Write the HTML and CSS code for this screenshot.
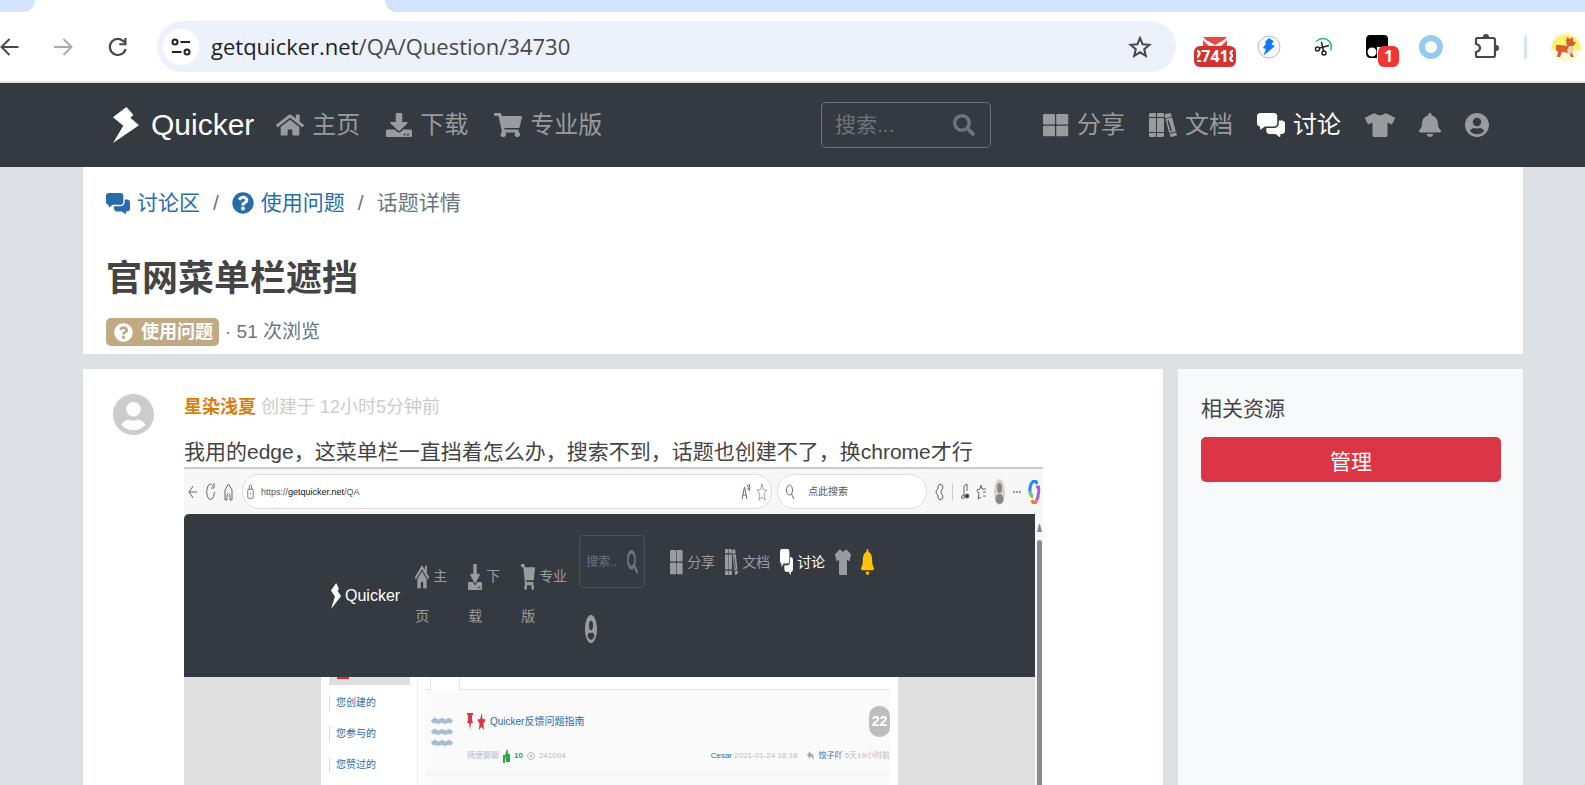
FILE: index.html
```html
<!DOCTYPE html>
<html lang="zh-CN">
<head>
    <meta charset="UTF-8">
    <meta name="viewport" content="width=device-width, initial-scale=1.0">
    <title>官网菜单栏遮挡 - Quicker</title>
    <link rel="stylesheet" href="styles.css">
</head>

<body>
    <svg class="sprite" aria-hidden="true">
        <symbol id="i-logo" viewBox="0 0 26 36" preserveAspectRatio="none"><path d="M13.400 0L20.500 8L17.400 10.700L26 18.300L0 36L10.300 18.700L0 10.300Z"/></symbol>
        <symbol id="i-home" viewBox="0 0 576 512" preserveAspectRatio="none"><path d="M280.37 148.26L96 300.11V464a16 16 0 0 0 16 16l112.06-.29a16 16 0 0 0 15.92-16V368a16 16 0 0 1 16-16h64a16 16 0 0 1 16 16v95.64a16 16 0 0 0 16 16.05L464 480a16 16 0 0 0 16-16V300L295.67 148.26a12.19 12.19 0 0 0-15.3 0zM571.6 251.47L488 182.56V44.05a12 12 0 0 0-12-12h-56a12 12 0 0 0-12 12v72.61L318.47 43a48 48 0 0 0-61 0L4.34 251.47a12 12 0 0 0-1.6 16.9l25.5 31A12 12 0 0 0 45.15 301l235.22-193.74a12.19 12.19 0 0 1 15.3 0L530.9 301a12 12 0 0 0 16.9-1.6l25.5-31a12 12 0 0 0-1.7-16.93z"/></symbol>
        <symbol id="i-download" viewBox="0 0 512 512" preserveAspectRatio="none"><path d="M216 0h80c13.3 0 24 10.7 24 24v168h87.7c17.8 0 26.700 21.500 14.100 34.100L269.700 378.300c-7.500 7.500-19.800 7.500-27.300 0L90.100 226.100c-12.600-12.600-3.700-34.100 14.100-34.100H192V24c0-13.300 10.700-24 24-24zm296 376v112c0 13.300-10.700 24-24 24H24c-13.300 0-24-10.700-24-24V376c0-13.300 10.700-24 24-24h146.700l49 49c20.100 20.100 52.500 20.100 72.600 0l49-49H488c13.300 0 24 10.700 24 24zm-124 88c0-11-9-20-20-20s-20 9-20 20 9 20 20 20 20-9 20-20zm64 0c0-11-9-20-20-20s-20 9-20 20 9 20 20 20 20-9 20-20z"/></symbol>
        <symbol id="i-cart" viewBox="0 0 576 512" preserveAspectRatio="none"><path d="M528.12 301.319l47.273-208C578.806 78.301 567.391 64 551.99 64H159.208l-9.166-44.810C147.758 8.021 137.930 0 126.529 0H24C10.745 0 0 10.745 0 24v16c0 13.255 10.745 24 24 24h69.883l70.248 343.435C147.325 417.100 136 435.222 136 456c0 30.928 25.072 56 56 56s56-25.072 56-56c0-15.674-6.447-29.835-16.824-40h209.647C430.447 426.165 424 440.326 424 456c0 30.928 25.072 56 56 56s56-25.072 56-56c0-22.172-12.888-41.332-31.579-50.405l5.517-24.276c3.413-15.018-8.002-29.319-23.403-29.319H218.117l-6.545-32h293.145c11.206 0 20.920-7.754 23.403-18.681z"/></symbol>
        <symbol id="i-search" viewBox="0 0 512 512" preserveAspectRatio="none"><path d="M505 442.700L405.300 343c-4.500-4.500-10.600-7-17-7H372c27.600-35.300 44-79.700 44-128C416 93.100 322.900 0 208 0S0 93.100 0 208s93.100 208 208 208c48.300 0 92.700-16.400 128-44v16.300c0 6.400 2.500 12.500 7 17l99.700 99.700c9.400 9.400 24.600 9.400 33.900 0l28.300-28.300c9.400-9.400 9.400-24.600.1-34zM208 336c-70.700 0-128-57.200-128-128 0-70.700 57.200-128 128-128 70.700 0 128 57.200 128 128 0 70.700-57.200 128-128 128z"/></symbol>
        <symbol id="i-grid" viewBox="0 0 26 24" preserveAspectRatio="none"><rect x="0" y="1" width="12" height="10.500" rx="1"/><rect x="13.200" y="1" width="12" height="10.500" rx="1"/><rect x="0" y="12.700" width="12" height="10.500" rx="1"/><rect x="13.200" y="12.700" width="12" height="10.500" rx="1"/></symbol>
        <symbol id="i-books" viewBox="0 0 28 24" preserveAspectRatio="none"><path d="M1 0H7V4H0V1ZM0 5H7V19H0ZM0 20H7V24H1L0 23ZM8 0H14L15 1V4H8ZM8 5H15V19H8ZM8 20H15V23L14 24H8ZM15.500 1.300L21 0L22 .8L22.800 3.700L16.300 5.200ZM16.500 6.100L23.100 4.600L26.800 18.500L20.200 20ZM20.500 21L27.100 19.400L28 22.600L22.300 24L21.400 23.300Z"/><path d="M19 7.500L22.300 18" stroke="#343a40" stroke-width="1.500"/></symbol>
        <symbol id="i-comments" viewBox="0 0 576 512" preserveAspectRatio="none"><path d="M416 224V64c0-35.300-28.700-64-64-64H64C28.700 0 0 28.700 0 64v160c0 35.300 28.700 64 64 64v54.200c0 8 9.100 12.600 15.500 7.800l82.800-62.100H352c35.300.1 64-28.600 64-63.900zm96-64h-64v64c0 52.900-43.100 96-96 96H192v64c0 35.300 28.700 64 64 64h125.700l82.800 62.100c6.400 4.800 15.500.2 15.500-7.800V448h32c35.300 0 64-28.700 64-64V224c0-35.300-28.700-64-64-64z"/></symbol>
        <symbol id="i-shirt" viewBox="0 0 640 512" preserveAspectRatio="none"><path d="M631.200 96.500L436.500 0C416.400 27.800 371.900 47.200 320 47.200S223.600 27.800 203.500 0L8.800 96.500c-7.900 4-11.100 13.600-7.200 21.500l57.200 114.500c4 7.900 13.600 11.100 21.500 7.200l56.600-27.700c10.600-5.200 23 2.500 23 14.400V480c0 17.700 14.300 32 32 32h256c17.700 0 32-14.300 32-32V226.300c0-11.800 12.400-19.600 23-14.400l56.600 27.700c7.900 4 17.500.8 21.500-7.200L638.300 118c4-7.900.8-17.600-7.100-21.500z"/></symbol>
        <symbol id="i-bell" viewBox="0 0 448 512" preserveAspectRatio="none"><path d="M224 512c35.320 0 63.970-28.650 63.970-64H160.030c0 35.350 28.650 64 63.970 64zm215.390-149.710c-19.320-20.760-55.470-51.990-55.470-154.290 0-77.700-54.480-139.900-127.940-155.160V32c0-17.670-14.320-32-31.980-32s-31.980 14.330-31.980 32v20.840C118.560 68.100 64.080 130.300 64.080 208c0 102.300-36.150 133.530-55.470 154.290-6 6.450-8.660 14.160-8.610 21.710.11 16.400 12.980 32 32.100 32h383.800c19.120 0 32-15.600 32.100-32 .05-7.550-2.610-15.270-8.610-21.710z"/></symbol>
        <symbol id="i-user" viewBox="0 8 496 496" preserveAspectRatio="none"><path d="M248 8C111 8 0 119 0 256s111 248 248 248 248-111 248-248S385 8 248 8zm0 96c48.600 0 88 39.400 88 88s-39.400 88-88 88-88-39.400-88-88 39.400-88 88-88zm0 344c-58.700 0-111.300-26.600-146.500-68.200 18.800-35.400 55.600-59.800 98.500-59.800 2.400 0 4.800.4 7.100 1.100 13 4.200 26.600 6.900 40.900 6.900 14.300 0 28-2.700 40.900-6.900 2.300-.7 4.700-1.100 7.100-1.100 42.900 0 79.700 24.400 98.500 59.800C359.300 421.400 306.700 448 248 448z"/></symbol>
        <symbol id="i-question" viewBox="0 0 512 512"><path d="M504 256c0 136.997-111.043 248-248 248S8 392.997 8 256C8 119.083 119.043 8 256 8s248 111.083 248 248zM262.655 90c-54.497 0-89.255 22.957-116.549 63.758-3.536 5.286-2.353 12.415 2.715 16.258l34.699 26.310c5.205 3.947 12.621 3.008 16.665-2.122 17.864-22.658 30.113-35.797 57.303-35.797 20.429 0 45.698 13.148 45.698 32.958 0 14.976-12.363 22.667-32.534 33.976C247.128 238.528 216 254.941 216 296v4c0 6.627 5.373 12 12 12h56c6.627 0 12-5.373 12-12v-1.333c0-28.462 83.186-29.647 83.186-106.667 0-58.002-60.165-102-116.531-102zM256 338c-25.365 0-46 20.635-46 46 0 25.364 20.635 46 46 46s46-20.636 46-46c0-25.365-20.635-46-46-46z"/></symbol>
        <symbol id="i-star" viewBox="0 0 24 24" preserveAspectRatio="none"><path d="M12 1L15.200 8.700L23.500 9.400L17.200 14.800L19.100 23L12 18.600L4.900 23L6.800 14.800L.5 9.400L8.800 8.700Z"/></symbol>
    </svg>

    <!-- browser chrome -->
    <div class="tab-strip">
        <div class="tab-prev"></div>
        <div class="tab-active"></div>
        <div class="tab-rest"></div>
    </div>
    <div class="toolbar">
        <div class="toolbar-nav">
            <button aria-label="后退"><svg viewBox="0 0 20 20"><path d="M18.500 10H2M9.500 2L1.500 10L9.500 18" fill="none" stroke="#474747" stroke-width="2"/></svg></button>
            <button aria-label="前进"><svg viewBox="0 0 20 20"><path d="M0 10H17M9.500 2L17.500 10L9.500 18" fill="none" stroke="#ababab" stroke-width="2"/></svg></button>
            <button aria-label="刷新"><svg viewBox="0 0 20 20"><path d="M16.500 5.500A8 8 0 1 0 17.600 12" fill="none" stroke="#474747" stroke-width="2.200"/><path d="M18.500 1V8.300H11.200V6.200H16.300V1Z" fill="#474747"/></svg></button>
        </div>
        <div class="omnibox">
            <button class="site-info" aria-label="网站信息"><svg width="20" height="20" viewBox="0 0 20 20" fill="none" stroke="#222" stroke-width="2"><circle cx="4" cy="5" r="2.500"/><path d="M9.500 5H19M1 15H10.500"/><circle cx="16" cy="15" r="2.500"/></svg></button>
            <div class="url" aria-label="地址"><b>getquicker.net</b>/QA/Question/34730</div>
            <button aria-label="收藏"><svg width="24" height="24" viewBox="0 0 24 24"><path d="M12 3L14.600 9.200L21.400 9.800L16.200 14.200L17.800 20.900L12 17.300L6.200 20.900L7.800 14.200L2.600 9.800L9.400 9.200Z" fill="none" stroke="#474747" stroke-width="2"/></svg></button>
        </div>
        <div class="extensions">
            <button class="ext" aria-label="邮件"><svg viewBox="0 0 24 24"><path d="M0 2H24L21 5L12 10L3 5Z" fill="#ea4a3d"/><path d="M0 5L6 11H0ZM24 5L18 11H24Z" fill="#ea4a3d"/></svg><span class="count count-wide"><span>27418</span></span></button>
            <button class="ext" aria-label="Quicker"><svg viewBox="0 0 24 24"><circle cx="12" cy="12" r="11" fill="#f8f8fa" stroke="#b7bac2"/><path d="M12 3L16.500 6L14.500 9.500L18 11L6.500 20.500L9 14L6 13L9 8.500L8 7Z" fill="#0a78ff"/></svg></button>
            <button class="ext" aria-label="剪切"><svg viewBox="0 0 24 24" fill="none"><path d="M5 6.500C12 0 23 5 19.500 15.500" stroke="#1fc373" stroke-width="1.500"/><g stroke="#222" stroke-width="1.500"><circle cx="6.500" cy="14" r="2"/><circle cx="13" cy="18" r="2"/><path d="M8.500 13L18 10.500M12.500 16L10.500 7"/></g></svg></button>
            <button class="ext" aria-label="脚本"><svg viewBox="0 0 24 24"><path d="M5 0H19Q23 0 23 4V12H12V23H6Q1 23 1 18V5Q1 0 5 0Z" fill="#000"/><circle cx="7" cy="17" r="4.500" fill="#fff"/></svg><span class="count count-one">1</span></button>
            <button class="ext" aria-label="圆环"><svg viewBox="0 0 24 24"><circle cx="12" cy="12" r="9" fill="none" stroke="#96cbf0" stroke-width="6"/></svg></button>
            <button class="ext" aria-label="扩展程序"><svg viewBox="0 0 24 24"><path d="M4 3H20Q22 3 22 5V20Q22 22 20 22H4Q3 22 3 20V17Q7 16 7 13Q7 10 3 9V5Q3 3 4 3Z" fill="none" stroke="#474747" stroke-width="2.200"/><path d="M10 2Q10 -1 13 -1Q16 -1 16 2ZM23 10Q26 10 26 13Q26 16 23 16Z" fill="#474747"/></svg></button>
        </div>
        <div class="toolbar-line"></div>
        <button class="profile" aria-label="个人资料"><svg width="30" height="30" viewBox="0 0 30 30"><circle cx="15" cy="15" r="15" fill="#fffad5"/><path d="M0 18A15 15 0 1 1 30 18Z" fill="#fdf26b"/><path d="M15 9L16 5L19 7L22 5V9L25 11L22 14L21 21L23 25H20L18 21L11 20L9 25H6L7 20L5 18V13L9 13L16 14Z" fill="#d6612c"/><path d="M18 14L22 14L21 20L19 23L16 19Z" fill="#e8d5b5"/></svg></button>
    </div>

    <!-- site header -->
    <nav class="navbar">
        <a class="brand" href="#"><svg><use href="#i-logo"/></svg>Quicker</a>
        <a class="nav-link" href="#"><svg class="w28"><use href="#i-home"/></svg>主页</a>
        <a class="nav-link" href="#"><svg class="w26"><use href="#i-download"/></svg>下载</a>
        <a class="nav-link" href="#"><svg class="w28"><use href="#i-cart"/></svg>专业版</a>
        <div class="nav-right">
            <form class="nav-search">
                <input type="text" placeholder="搜索..." aria-label="搜索">
                <button type="button" aria-label="搜索"><svg width="22" height="22"><use href="#i-search"/></svg></button>
            </form>
            <a class="nav-link" href="#"><svg class="w26"><use href="#i-grid"/></svg>分享</a>
            <a class="nav-link" href="#"><svg class="w28"><use href="#i-books"/></svg>文档</a>
            <a class="nav-link active" href="#"><svg class="w28"><use href="#i-comments"/></svg>讨论</a>
            <a class="nav-link" href="#" aria-label="皮肤"><svg class="w30"><use href="#i-shirt"/></svg></a>
            <a class="nav-link" href="#" aria-label="通知"><svg class="w22"><use href="#i-bell"/></svg></a>
            <a class="nav-link" href="#" aria-label="账户"><svg><use href="#i-user"/></svg></a>
        </div>
    </nav>

    <div class="container">
        <header class="topic-header">
            <div class="breadcrumb">
                <a href="#"><svg width="24" height="21"><use href="#i-comments"/></svg>讨论区</a>
                <span>/</span>
                <a href="#"><svg width="22" height="22"><use href="#i-question"/></svg>使用问题</a>
                <span>/</span>
                <span>话题详情</span>
            </div>
            <h1>官网菜单栏遮挡</h1>
            <div class="topic-info">
                <a class="badge" href="#"><svg width="19" height="19"><use href="#i-question"/></svg>使用问题</a>
                <span>· 51 次浏览</span>
            </div>
        </header>

        <div class="columns">
            <article class="post">
                <svg class="avatar"><use href="#i-user"/></svg>
                <div class="post-body">
                    <div class="post-meta"><a href="#">星染浅夏</a> 创建于 12小时5分钟前</div>
                    <p>我用的edge，这菜单栏一直挡着怎么办，搜索不到，话题也创建不了，换chrome才行</p>

                    <div class="shot">
                        <div class="shot-bar">
                            <svg width="9" height="20" viewBox="0 0 9 20"><path d="M9 10H1M5 4L1 10L5 16"/></svg>
                            <svg width="9" height="20" viewBox="0 0 9 20"><path d="M7 4Q4 0 2 4Q0 8 1 13Q3 19 6 17Q8 15 8.500 10M8 1V6H5"/></svg>
                            <svg width="9" height="20" viewBox="0 0 9 20"><path d="M1 18V8L4.500 2L8 8V18H6V13Q4.500 10 3 13V18Z"/></svg>
                            <div class="shot-url">
                                <svg width="7" height="18" viewBox="0 0 9 20" preserveAspectRatio="none"><rect x="1" y="7" width="7" height="10" rx="1"/><path d="M3 7V3Q4.500 1 6 3V7M4.500 11V13"/></svg>
                                <span>https://<b>getquicker.net</b>/QA</span>
                                <svg width="9" height="16" viewBox="0 0 9 16"><path d="M1 15L3.500 3L6 15M2 11H5M6 1Q8 3 7 6M8 0Q10 4 8 7"/></svg>
                                <svg width="10" height="18"><use href="#i-star"/></svg>
                            </div>
                            <div class="shot-find">
                                <svg width="8" height="16" viewBox="0 0 8 16"><ellipse cx="3.500" cy="6" rx="3" ry="5"/><path d="M5.500 10L8 15"/></svg>
                                <span>点此搜索</span>
                            </div>
                            <div class="shot-tools">
                                <svg width="8" height="20" viewBox="0 0 8 20"><path d="M7 6Q7 2 4 2L2 4V7Q0 8 0 10Q0 12 2 13V16L4 18Q7 18 7 14Q5 12 5 10Q5 8 7 6Z"/></svg>
                                <i></i>
                                <svg width="8" height="18" viewBox="0 0 8 18"><path d="M3 13V3L6 1V8"/><circle cx="2" cy="14" r="1.500"/><circle cx="6" cy="13" r="2" fill="#333"/></svg>
                                <svg width="9" height="18" viewBox="0 0 9 18"><path d="M9 6H5L4 2L3 6L0 7L2 11L1 16L4 14M6 9H9M6 13H9"/></svg>
                                <svg width="11" height="26" viewBox="0 0 11 26"><ellipse cx="5.500" cy="13" rx="5.500" ry="13" fill="#d5d2cd" stroke="none"/><ellipse cx="5.500" cy="9" rx="2.500" ry="5" fill="#8b8681" stroke="none"/><ellipse cx="5.500" cy="20" rx="4" ry="5" fill="#8b8681" stroke="none"/></svg>
                                <svg width="8" height="4" viewBox="0 0 8 4"><path d="M0 2H2M3 2H5M6 2H8" stroke="#444"/></svg>
                                <svg width="11" height="24" viewBox="0 0 11 24" class="copilot"><path d="M3 16L1.500 14Q0 9 2 4L4 1.500H7L8 4" stroke="#1d8fe8"/><path d="M1.500 11Q1 17 4 17" stroke="#8fc93a"/><path d="M7 7H9.500Q10.500 11 9 16L8 20" stroke="#a65be0"/><path d="M3 20L4 22.500H6.500L8 19" stroke="#ff704d"/></svg>
                            </div>
                        </div>
                        <div class="shot-page">
                            <div class="shot-main">
                                <div class="shot-nav">
                                    <a class="shot-brand" href="#"><svg width="10" height="26"><use href="#i-logo"/></svg>Quicker</a>
                                    <a class="shot-item" href="#"><svg><use href="#i-home"/></svg>主页</a>
                                    <a class="shot-item" href="#"><svg><use href="#i-download"/></svg>下载</a>
                                    <a class="shot-item wide" href="#"><svg><use href="#i-cart"/></svg>专业版</a>
                                    <div class="shot-right">
                                        <div class="shot-links">
                                            <div class="shot-search">搜索.. <svg width="11" height="24"><use href="#i-search"/></svg></div>
                                            <a href="#"><svg><use href="#i-grid"/></svg>分享</a>
                                            <a href="#"><svg><use href="#i-books"/></svg>文档</a>
                                            <a class="active" href="#"><svg><use href="#i-comments"/></svg>讨论</a>
                                            <a href="#" aria-label="皮肤"><svg class="shirt"><use href="#i-shirt"/></svg></a>
                                            <a class="bell" href="#" aria-label="通知"><svg><use href="#i-bell"/></svg></a>
                                        </div>
                                        <svg class="shot-user"><use href="#i-user"/></svg>
                                    </div>
                                </div>
                                <div class="shot-content">
                                    <div class="shot-menu">
                                        <div class="current"><span></span></div>
                                        <a href="#">您创建的</a>
                                        <a href="#">您参与的</a>
                                        <a href="#">您赞过的</a>
                                    </div>
                                    <div class="shot-list">
                                        <div class="shot-tabs"><span></span></div>
                                        <div class="shot-topic">
                                            <svg class="waves" width="20" height="30" viewBox="0 0 20 30"><path d="M0 5L3 3L6 5L10 3L13 5L17 3L20 5M0 16L3 14L6 16L10 14L13 16L17 14L20 16M0 27L3 25L6 27L10 25L13 27L17 25L20 27"/></svg>
                                            <div class="shot-text">
                                                <div class="shot-title">
                                                    <svg width="6" height="17" viewBox="0 0 6 17"><path d="M0 0H6V2H5V7L6 10H4L3 17L2 10H0L1 7V2H0Z"/></svg>
                                                    <svg width="9" height="19"><use href="#i-star"/></svg>
                                                    <a href="#">Quicker反馈问题指南</a>
                                                    <span class="replies">22</span>
                                                </div>
                                                <div class="shot-stats">
                                                    <span>随便聊聊</span>
                                                    <svg width="7" height="14" viewBox="0 0 7 14" fill="#28a745"><path d="M0 6H2V14H0ZM2 6L4 0L5 2V5H7V13H3Z"/></svg>
                                                    <b>10</b>
                                                    <svg width="8" height="8" viewBox="0 0 8 8" fill="none" stroke="#bbb"><circle cx="4" cy="4" r="3.500"/><circle cx="4" cy="4" r="1"/></svg>
                                                    <span>241094</span>
                                                    <span class="last"><a href="#">Cesar</a> 2021-01-24 18:18</span>
                                                    <svg width="7" height="12" viewBox="0 0 7 12" fill="#aaa"><path d="M0 5L3 1V3Q7 3 7 10Q5 6 3 7V9Z"/></svg>
                                                    <span><a href="#">饺子吖</a> 5天19小时前</span>
                                                </div>
                                            </div>
                                        </div>
                                    </div>
                                </div>
                            </div>
                            <div class="shot-scroll"><i></i></div>
                        </div>
                    </div>
                </div>
            </article>

            <aside class="sidebar">
                <h2>相关资源</h2>
                <button>管理</button>
            </aside>
        </div>
    </div>
</body>

</html>
```
FILE: styles.css
```css
* {
    box-sizing: border-box;
}

body {
    margin: 0;
    height: 100vh;
    overflow: hidden;
    display: flex;
    flex-direction: column;
    font-family: "Liberation Sans", "Noto Sans CJK SC", sans-serif;
    font-size: 21px;
    line-height: 32px;
    color: #444;
    background: #dde0e5;
}

a {
    color: #286ca9;
    text-decoration: none;
}

button {
    padding: 0;
    border: none;
    background: none;
    font-family: inherit;
}

svg {
    display: block;
    flex: none;
    overflow: visible;
}

svg:not([fill]) {
    fill: currentColor;
}

.sprite {
    position: absolute;
    width: 0;
    height: 0;
}

/* browser */
.tab-strip {
    display: flex;
    flex: none;
    height: 12px;
    background: #fff;
}

.tab-prev {
    width: 35px;
    background: #d3e3fd;
    border-bottom-right-radius: 12px;
}

.tab-active {
    width: 350px;
}

.tab-rest {
    flex: 1;
    background: #d3e3fd;
    border-bottom-left-radius: 12px;
}

.toolbar {
    display: flex;
    flex: none;
    align-items: center;
    height: 71px;
    padding-right: 4px;
    background: #fff;
    border-bottom: 2px solid #e2e2de;
}

.toolbar-nav {
    display: flex;
    gap: 34px;
    margin-right: 29px;
}

.toolbar-nav svg {
    width: 20px;
    height: 20px;
}

.omnibox {
    display: flex;
    flex: 1;
    align-items: center;
    height: 51px;
    padding: 0 24px 0 6px;
    border-radius: 26px;
    background: #ecf1fb;
}

.site-info {
    display: flex;
    align-items: center;
    justify-content: center;
    width: 36px;
    height: 36px;
    border-radius: 50%;
    background: #fff;
}

.url {
    flex: 1;
    margin-left: 12px;
    padding-bottom: 2px;
    font-family: "Open Sans", sans-serif;
    font-size: 22px;
    color: #474747;
}

.url b {
    font-weight: normal;
    color: #1f1f1f;
}

.extensions {
    display: flex;
    gap: 30px;
    margin-left: 27px;
}

.ext {
    position: relative;
    width: 24px;
    height: 24px;
}

.ext svg {
    width: 24px;
    height: 24px;
}

.count {
    position: absolute;
    top: 11px;
    height: 21px;
    border-radius: 6px;
    background: #d43131;
    color: #fff;
    font: bold 16px/21px "Open Sans", sans-serif;
}

.count-wide {
    left: -9px;
    width: 42px;
    padding: 0 3px;
}

.count-wide span {
    display: flex;
    justify-content: center;
    overflow: hidden;
}

.count-one {
    left: 13px;
    width: 21px;
    background: #f23434;
}

.toolbar-line {
    width: 3px;
    height: 24px;
    margin: 0 24px 0 27px;
    border-radius: 2px;
    background: #d3e3fd;
}

/* navbar */
.navbar {
    display: flex;
    flex: none;
    align-items: center;
    gap: 26px;
    height: 84px;
    padding: 0 96px 0 113px;
    background: #343a40;
}

.brand {
    display: flex;
    align-items: center;
    gap: 12px;
    margin-right: -4px;
    font-size: 30px;
    color: #fff;
}

.brand svg {
    width: 26px;
    height: 36px;
}

.nav-right {
    display: flex;
    align-items: center;
    gap: 24px;
    margin-left: auto;
}

.nav-link {
    display: flex;
    align-items: center;
    gap: 8px;
    font-size: 24px;
    white-space: nowrap;
    color: #999c9f;
}

.nav-link.active {
    color: #fff;
}

.nav-link svg {
    width: 24px;
    height: 24px;
}

.nav-link .w22 {
    width: 22px;
}

.nav-link .w26 {
    width: 26px;
}

.nav-link .w28 {
    width: 28px;
}

.nav-link .w30 {
    width: 30px;
}

.nav-search {
    display: flex;
    align-items: center;
    width: 170px;
    height: 46px;
    margin-right: 28px;
    padding: 0 15px 0 13px;
    border: 1px solid #6c757d;
    border-radius: 5px;
}

.nav-search input {
    flex: 1;
    min-width: 0;
    padding: 0;
    border: none;
    outline: none;
    background: none;
    font-family: inherit;
    font-size: 21px;
    color: #fff;
}

.nav-search input::placeholder {
    color: #6c757d;
}

.nav-search button {
    color: #6c757d;
}

/* topic */
.container {
    display: flex;
    flex: 1;
    flex-direction: column;
    min-height: 0;
    padding: 0 62px 0 83px;
}

.topic-header {
    padding: 20px 23px 8px;
    background: #fff;
}

.breadcrumb {
    display: flex;
    align-items: center;
    gap: 13px;
    color: #6c757d;
}

.breadcrumb a {
    display: flex;
    align-items: center;
    gap: 7px;
}

h1 {
    margin: 34px 0 25px;
    font-size: 36px;
    line-height: 52px;
    height: 40px;
}

.topic-info {
    display: flex;
    align-items: center;
    gap: 6px;
    font-size: 19px;
    line-height: 28px;
    color: #6c757d;
}

.badge {
    display: flex;
    align-items: center;
    gap: 8px;
    padding: 0 6px 0 8px;
    border-radius: 5px;
    background: #bfaa84;
    color: #fff;
    font-size: 18px;
    font-weight: bold;
}

.columns {
    display: flex;
    flex: 1;
    gap: 15px;
    min-height: 0;
    margin-top: 15px;
}

.post {
    display: flex;
    flex: 1;
    align-items: stretch;
    gap: 30px;
    min-width: 0;
    padding: 25px 120px 0 30px;
    background: #fff;
}

.avatar {
    width: 41px;
    height: 41px;
    color: #ccc;
}

.post-body {
    display: flex;
    flex: 1;
    flex-direction: column;
    min-width: 0;
}

.post-meta {
    font-size: 18px;
    line-height: 26px;
    color: #ccc;
}

.post-meta a {
    font-weight: bold;
    color: #d97e0d;
}

.post-body p {
    margin: 16px 0 0;
    line-height: 31px;
}

.sidebar {
    width: 345px;
    padding: 24px 22px 24px 23px;
    background: #f8f9fb;
}

.sidebar h2 {
    margin: 0 0 12px;
    font-size: 21px;
    font-weight: normal;
}

.sidebar button {
    width: 100%;
    height: 45px;
    border-radius: 5px;
    background: #dc3545;
    color: #fff;
    font-size: 21px;
}

/* screenshot attached to the post */
.shot {
    display: flex;
    flex: 1;
    flex-direction: column;
    min-height: 0;
    overflow: hidden;
    border-top: 2px solid #ccc;
    background: #f7f7f7;
    font-size: 10px;
    line-height: 16px;
}

.shot-bar {
    display: flex;
    flex: none;
    align-items: center;
    gap: 9px;
    height: 45px;
    padding: 0 3px 0 4px;
    color: #555;
}

.shot-bar svg {
    fill: none;
    stroke: #666;
}

.shot-url,
.shot-find {
    display: flex;
    align-items: center;
    height: 35px;
    border: 1px solid #ddd;
    border-radius: 17px;
    background: #fff;
}

.shot-url {
    flex: 1;
    gap: 7px;
    padding: 0 4px;
    font-size: 9px;
}

.shot-url span {
    flex: 1;
}

.shot-url b {
    font-weight: normal;
    color: #111;
}

.shot-find {
    gap: 14px;
    width: 150px;
    margin-left: -4px;
    padding-left: 8px;
}

.shot-tools {
    display: flex;
    align-items: center;
    gap: 8px;
}

.shot-tools i {
    width: 1px;
    height: 18px;
    background: #ccc;
}

.shot-bar .copilot {
    stroke-width: 3px;
}

.shot-page {
    display: flex;
    flex: 1;
    min-height: 0;
}

.shot-main {
    display: flex;
    flex: 1;
    flex-direction: column;
    min-width: 0;
}

.shot-nav {
    display: flex;
    flex: none;
    align-items: center;
    height: 163px;
    padding-left: 147px;
    border-top-left-radius: 5px;
    background: #343a40;
    font-size: 14px;
    color: #999c9f;
}

.shot-nav a {
    color: inherit;
}

.shot-brand {
    display: flex;
    align-items: center;
    gap: 4px;
    margin-right: 15px;
    font-size: 16px;
}

.shot-nav .shot-brand {
    color: #fff;
}

.shot-item {
    width: 36px;
    margin-right: 17px;
    line-height: 40px;
}

.shot-item.wide {
    width: 48px;
    margin-right: 10px;
}

.shot-item svg {
    display: inline-block;
    width: 14px;
    height: 26px;
    margin-right: 4px;
    vertical-align: middle;
}

.shot-right {
    align-self: flex-start;
    padding-top: 21px;
}

.shot-links {
    display: flex;
    align-items: center;
    gap: 10px;
}

.shot-links a {
    display: flex;
    align-items: center;
    gap: 4px;
}

.shot-links a svg {
    width: 13px;
    height: 26px;
}

.shot-links .active {
    color: #fff;
}

.shot-links .bell {
    color: #ffc107;
}

.shot-links .shirt {
    width: 16px;
}

.shot-search {
    display: flex;
    align-items: center;
    justify-content: space-between;
    width: 66px;
    height: 53px;
    margin-right: 15px;
    padding: 0 6px;
    border: 1px solid #4b5258;
    border-radius: 4px;
    font-size: 12px;
    color: #6c757d;
}

.shot-user {
    width: 12px;
    height: 28px;
    margin: 27px 0 0 6px;
}

.shot-content {
    display: flex;
    flex: 1;
    padding: 0 137px;
    min-height: 0;
    background: #dfdfdf;
}

.shot-menu {
    width: 97px;
    padding: 0 7px 0 8px;
    border-right: 1px solid #eee;
    background: #fff;
}

.shot-menu .current {
    height: 8px;
    margin-bottom: 10px;
    padding-left: 8px;
    background: #dfdfdf;
}

.shot-menu .current span {
    display: block;
    width: 12px;
    height: 2px;
    background: #e8262b;
}

.shot-menu a {
    display: block;
    margin-bottom: 15px;
    padding-left: 6px;
    border-left: 1px solid #ddd;
}

.shot-list {
    flex: 1;
    padding: 0 8px 0 7px;
    background: #fff;
}

.shot-tabs {
    height: 13px;
    padding-left: 5px;
    border-bottom: 1px solid #e4e4e4;
}

.shot-tabs span {
    display: block;
    width: 30px;
    height: 13px;
    border: solid #e4e4e4;
    border-width: 0 1px;
    background: #fff;
}

.shot-topic {
    display: flex;
    gap: 15px;
    height: 85px;
    padding: 16px 0 0 7px;
    border-bottom: 1px solid #eee;
    background: #fafafa;
    box-shadow: 0 20px #fafafa;
}

.waves {
    margin-top: 11px;
}

svg.waves {
    fill: none;
    stroke: #a9bdcf;
    stroke-width: 4px;
}

.shot-text {
    flex: 1;
}

.shot-title {
    display: flex;
    align-items: center;
    gap: 4px;
    color: #dc3545;
}

.replies {
    margin-left: auto;
    width: 21px;
    border-radius: 10px;
    background: #bbbdbf;
    color: #fff;
    font-size: 14px;
    font-weight: bold;
    line-height: 31px;
    text-align: center;
}

.shot-stats {
    display: flex;
    align-items: center;
    gap: 4px;
    margin-top: 11px;
    font-size: 8px;
    color: #bbb;
}

.shot-stats b {
    color: #28a745;
}

.shot-stats .last {
    margin: 0 6px 0 auto;
}

/* scrollbar */
.shot-scroll {
    width: 8px;
    padding: 10px 1px 0 2px;
}

.shot-scroll::before {
    content: "";
    display: block;
    border: solid transparent;
    border-width: 0 2px 8px;
    border-bottom-color: #888;
}

.shot-scroll i {
    display: block;
    height: 100%;
    margin-top: 8px;
    border-radius: 3px;
    background: #8a8a8a;
}
```
